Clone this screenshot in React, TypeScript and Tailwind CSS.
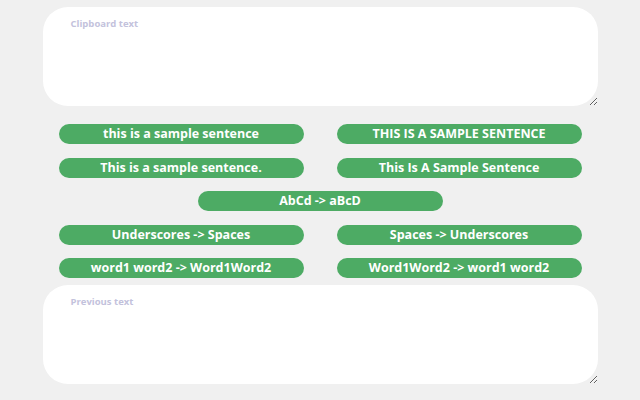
import { useState } from 'react';

const FONT = { fontFamily: '"Open Sans", "Noto Sans", sans-serif' };

function Btn({ label }: { label: string }) {
  return (
    <button
      className="block h-5 w-[245px] rounded-[10px] bg-[#4dab64] text-[12.5px] font-bold leading-5 text-white"
      style={FONT}
    >
      {label}
    </button>
  );
}

export default function App() {
  const [clip, setClip] = useState('');
  const [prev, setPrev] = useState('');

  return (
    <div className="min-h-[400px] w-[640px] bg-[#f0f0f0]" style={FONT}>
      <div className="mx-auto flex w-[555px] flex-col pt-[7px]">
        <textarea
          value={clip}
          onChange={(e) => setClip(e.target.value)}
          placeholder="Clipboard text"
          className="block h-[99px] w-full rounded-[25px] bg-white px-7 py-[10px] text-[9.5px] font-bold outline-none placeholder:text-[#c3c2dc]"
        />
        <div className="mt-[18px] grid grid-cols-2 gap-y-[13.5px] px-4">
          <div className="flex justify-start"><Btn label="this is a sample sentence" /></div>
          <div className="flex justify-end"><Btn label="THIS IS A SAMPLE SENTENCE" /></div>
          <div className="flex justify-start"><Btn label="This is a sample sentence." /></div>
          <div className="flex justify-end"><Btn label="This Is A Sample Sentence" /></div>
          <div className="col-span-2 flex justify-center"><Btn label="AbCd -> aBcD" /></div>
          <div className="flex justify-start"><Btn label="Underscores -> Spaces" /></div>
          <div className="flex justify-end"><Btn label="Spaces -> Underscores" /></div>
          <div className="flex justify-start"><Btn label="word1 word2 -> Word1Word2" /></div>
          <div className="flex justify-end"><Btn label="Word1Word2 -> word1 word2" /></div>
        </div>
        <textarea
          value={prev}
          onChange={(e) => setPrev(e.target.value)}
          placeholder="Previous text"
          className="mt-[7px] block h-[99px] w-full rounded-[25px] bg-white px-7 py-[10px] text-[9.5px] font-bold outline-none placeholder:text-[#c3c2dc]"
        />
      </div>
    </div>
  );
}
